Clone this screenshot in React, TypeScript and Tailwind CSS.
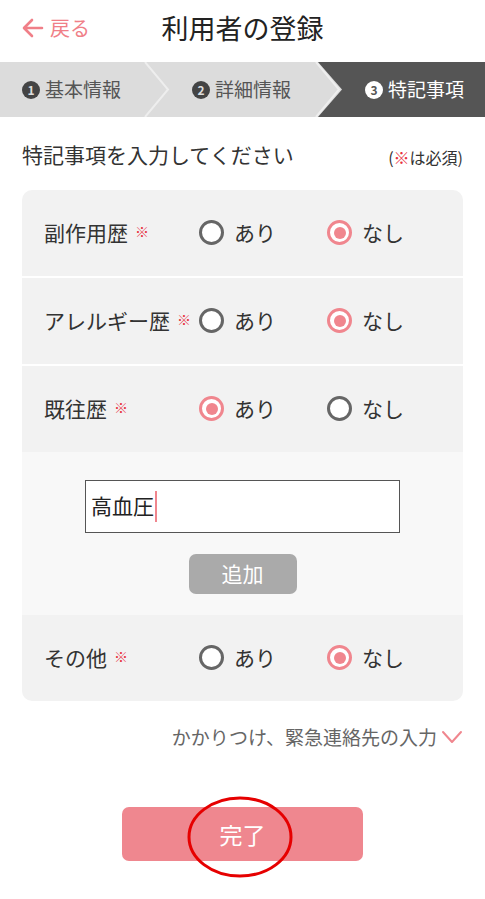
import React from "react";

const Radio = ({ checked }: { checked: boolean }) =>
  checked ? (
    <span className="flex h-[25px] w-[25px] items-center justify-center rounded-full border-[3px] border-[#f0868e] bg-white">
      <span className="h-[12px] w-[12px] rounded-full bg-[#f0868e]" />
    </span>
  ) : (
    <span className="h-[25px] w-[25px] rounded-full border-[3px] border-[#666] bg-white" />
  );

const Row = ({ label, value }: { label: string; value: boolean }) => (
  <div className="flex h-[86px] items-center pl-[22px]">
    <div className="flex w-[155px] items-start">
      <span className="text-[21px] text-[#333]">{label}</span>
      <span className="ml-[7px] mt-[7px] text-[14px] leading-none text-[#e8303e]">※</span>
    </div>
    <div className="flex w-[128px] items-center gap-[10px]">
      <Radio checked={value} />
      <span className="text-[21px] text-[#333]">あり</span>
    </div>
    <div className="flex items-center gap-[10px]">
      <Radio checked={!value} />
      <span className="text-[21px] text-[#333]">なし</span>
    </div>
  </div>
);

const Num = ({ n, dark }: { n: string; dark?: boolean }) => (
  <span
    className={
      dark
        ? "flex h-[18px] w-[18px] items-center justify-center rounded-full bg-white text-[12px] font-bold leading-none text-[#555]"
        : "flex h-[18px] w-[18px] items-center justify-center rounded-full bg-[#444] text-[12px] font-bold leading-none text-[#ddd]"
    }
  >
    {n}
  </span>
);

export default function App() {
  return (
    <div className="min-h-[899px] w-[485px] bg-white font-['Noto_Sans_CJK_JP',sans-serif]">
      {/* header */}
      <div className="grid h-[62px] grid-cols-[1fr_auto_1fr] items-center pb-[6px]">
        <div className="flex items-center gap-[6px] pl-[22px] text-[#f07f88]">
          <svg width="22" height="20" viewBox="0 0 22 20" fill="none" stroke="#f07f88" strokeWidth="2.6" strokeLinecap="round" strokeLinejoin="round">
            <path d="M20 10H3M10 2L2 10l8 8" />
          </svg>
          <span className="text-[20px]">戻る</span>
        </div>
        <div className="text-[27px] text-[#222]">利用者の登録</div>
        <div />
      </div>

      {/* steps */}
      <div className="relative flex h-[55px] bg-[#dcdcdc]">
        <div className="flex w-[145px] items-center gap-[5px] pl-[22px]">
          <Num n="1" />
          <span className="text-[19px] text-[#555]">基本情報</span>
        </div>
        <div className="flex w-[173px] items-center gap-[5px] pl-[47px]">
          <Num n="2" />
          <span className="text-[19px] text-[#555]">詳細情報</span>
        </div>
        <div className="flex flex-1 items-center gap-[5px] bg-[#555] pl-[47px] [clip-path:polygon(0_0,100%_0,100%_100%,0_100%,24px_50%)]">
          <Num n="3" dark />
          <span className="text-[19px] text-white">特記事項</span>
        </div>
        <svg className="pointer-events-none absolute left-0 top-0" width="485" height="55" viewBox="0 0 485 55" fill="none">
          <path d="M145 0L168 27.5L145 55" stroke="#eeeeee" strokeWidth="2" />
          <path d="M316 0L339 27.5L316 55" stroke="#eeeeee" strokeWidth="2" />
        </svg>
      </div>

      {/* heading */}
      <div className="flex items-end justify-between px-[22px] pt-[22px]">
        <span className="text-[21px] text-[#333]">特記事項を入力してください</span>
        <span className="pb-[2px] text-[16px] text-[#333]">
          (<span className="text-[#e8303e]">※</span>は必須)
        </span>
      </div>

      {/* card */}
      <div className="mx-[22px] mt-[19px] overflow-hidden rounded-[10px] bg-[#f2f2f2]">
        <Row label="副作用歴" value={false} />
        <div className="h-[2px] bg-white" />
        <Row label="アレルギー歴" value={false} />
        <div className="h-[2px] bg-white" />
        <Row label="既往歴" value={true} />
        <div className="flex h-[163px] flex-col items-center bg-[#f8f8f8] pt-[28px]">
          <div className="flex h-[53px] w-[315px] items-center border-[1.5px] border-[#555] bg-white pl-[5px]">
            <span className="text-[21px] text-[#222]">高血圧</span>
            <span className="ml-[1px] h-[31px] w-[2px] bg-[#f0868e]" />
          </div>
          <div className="mt-[21px] flex h-[40px] w-[108px] items-center justify-center rounded-[7px] bg-[#aaaaaa] text-[21px] text-white">
            追加
          </div>
        </div>
        <Row label="その他" value={false} />
      </div>

      {/* link */}
      <div className="mt-[22px] flex items-center justify-end gap-[4px] pr-[22px]">
        <span className="text-[19px] text-[#666]">かかりつけ、緊急連絡先の入力</span>
        <svg width="22" height="14" viewBox="0 0 22 14" fill="none" stroke="#f0868e" strokeWidth="2" strokeLinecap="round" strokeLinejoin="round">
          <path d="M2 2l9 10 9-10" />
        </svg>
      </div>

      {/* button */}
      <div className="mt-[56px] flex justify-center">
        <div className="relative flex h-[54px] w-[241px] items-center justify-center rounded-[7px] bg-[#ef878f]">
          <span className="text-[23px] text-white">完了</span>
          <svg className="pointer-events-none absolute left-[64px] top-[-12px]" width="108" height="84" viewBox="0 0 108 84" fill="none">
            <ellipse cx="54" cy="42" rx="51" ry="39" stroke="#e60000" strokeWidth="3" />
          </svg>
        </div>
      </div>
    </div>
  );
}
